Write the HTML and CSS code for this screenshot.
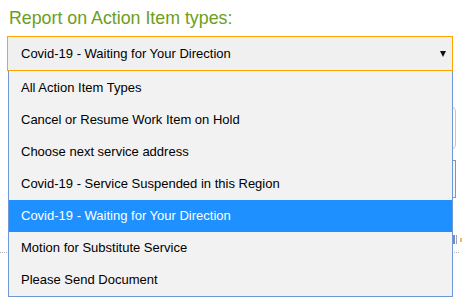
FILE: index.html
```html
<!DOCTYPE html>
<html>
<head>
<meta charset="utf-8">
<link rel="stylesheet" href="styles.css">
</head>
<body>
<div class="page">
  <h1 class="title">Report on Action Item types:</h1>
  <div class="picker">
    <div class="select">
      <span class="select-value">Covid-19 - Waiting for Your Direction</span>
      <span class="caret"></span>
    </div>
    <div class="under">
      <div class="field field-round"></div>
      <div class="field field-square"></div>
      <div class="bars"><span class="b1"></span><span class="b2"></span><span class="b3"></span><span class="b4"></span><span class="dot"></span></div>
      <div class="rule"></div>
    </div>
    <ul class="menu">
      <li class="opt">All Action Item Types</li>
      <li class="opt">Cancel or Resume Work Item on Hold</li>
      <li class="opt">Choose next service address</li>
      <li class="opt">Covid-19 - Service Suspended in this Region</li>
      <li class="opt opt-active">Covid-19 - Waiting for Your Direction</li>
      <li class="opt">Motion for Substitute Service</li>
      <li class="opt">Please Send Document</li>
    </ul>
  </div>
</div>
</body>
</html>
```

FILE: styles.css
```css
html, body {
  margin: 0;
  padding: 0;
  background: #ffffff;
  font-family: "Liberation Sans", Arial, sans-serif;
}
.page {
  padding: 8px 12px 0 7px;
  overflow: hidden;
  height: 297px;
}
.title {
  margin: 0 0 8px 0;
  padding-left: 2px;
  font-size: 17.8px;
  line-height: 20px;
  font-weight: normal;
  color: #6c9e20;
}
.picker {
  position: relative;
}
.select {
  box-sizing: border-box;
  height: 35px;
  border: 1px solid #ffa500;
  background: #f0f0f0;
  display: flex;
  align-items: center;
  padding: 0 6px 0 13px;
  font-size: 13px;
  color: #000;
}
.select-value {
  flex: 1;
}
.caret {
  width: 0;
  height: 0;
  border-left: 3px solid transparent;
  border-right: 3px solid transparent;
  border-top: 6px solid #111;
  margin-top: 1px;
}
.under {
  display: flex;
  flex-direction: column;
  align-items: flex-end;
  margin-right: -3px;
}
.field {
  box-sizing: border-box;
  width: 200px;
}
.field-round {
  margin-top: 36px;
  height: 42px;
  border: 1px solid #c4c4c4;
  border-radius: 4px;
}
.field-square {
  margin-top: 11px;
  height: 38px;
  border: 1px solid #7d99b3;
  background: #f4f6f8;
}
.bars {
  margin-top: 37px;
  margin-right: -6px;
  display: flex;
  align-items: flex-start;
  gap: 1px;
  height: 9px;
}
.bars span {
  display: block;
  width: 1px;
  height: 9px;
}
.bars .b1 { background: #8a9bb0; width: 2px; }
.bars .b2 { background: #e8a640; }
.bars .b3 { background: #6f8fc0; width: 2px; }
.bars .b4 { background: #9aa6b5; }
.bars .dot {
  width: 2px;
  height: 4px;
  margin-top: 3px;
  margin-left: 2px;
  background: #f2b866;
}
.rule {
  align-self: stretch;
  margin: 8px -3px 0 -7px;
  border-top: 1px dotted #aab0b8;
}
.menu {
  position: absolute;
  left: 1px;
  right: 0;
  top: 35px;
  margin: 0;
  padding: 1px 0 0 0;
  list-style: none;
  box-sizing: border-box;
  background: #f2f2f2;
  border: 1px solid #7097d6;
  border-top: none;
}
.opt {
  height: 32px;
  line-height: 32px;
  padding-left: 12px;
  font-size: 13px;
  color: #000;
  white-space: nowrap;
}
.opt-active {
  background: #1e90ff;
  color: #fff;
}
```
